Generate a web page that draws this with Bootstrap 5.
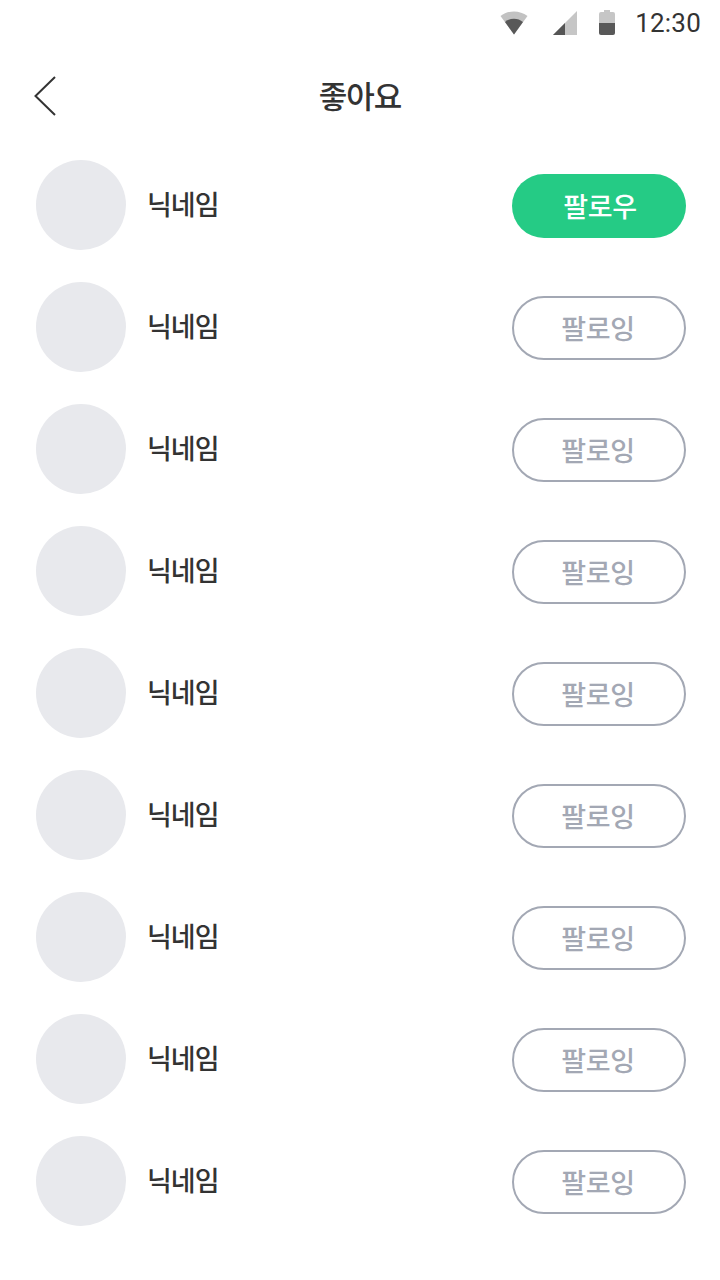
<!DOCTYPE html>
<html lang="ko">
    <head>
        <title>좋아요</title>
        <link href="https://cdn.jsdelivr.net/npm/bootstrap@5.3.2/dist/css/bootstrap.min.css" rel="stylesheet">
        <script src="https://cdn.jsdelivr.net/npm/bootstrap@5.3.2/dist/js/bootstrap.bundle.min.js"></script>
        <style>
            body { font-family: "Noto Sans CJK KR", Roboto, sans-serif; background: #fff; color: #333; }
            .status-bar { height: 48px; padding-right: 19px; padding-bottom: 2px; }
            .status-wifi { margin-right: 25px; }
            .status-signal { margin-right: 21px; }
            .status-time { font-family: Roboto, sans-serif; font-size: 26px; letter-spacing: 0.2px; color: #333; line-height: 1; margin-left: 19px; }
            .top-bar { height: 96px; padding-bottom: 4px; }
            .back-btn { position: absolute; left: 33px; top: 28px; line-height: 0; }
            .top-title { font-size: 31px; font-weight: 500; letter-spacing: -1px; color: #333; line-height: 1; }
            .like-list { padding: 16px 34px 0 36px; gap: 32px; }
            .avatar-blank { width: 90px; height: 90px; background: #e8e9ed; }
            .nick { font-size: 27px; font-weight: 500; letter-spacing: -1px; color: #333; margin-left: 21px; line-height: 1; margin-top: -4px; }
            .follow-btn { width: 174px; height: 64px; font-size: 27px; font-weight: 500; padding: 0 0 2px; line-height: 1; letter-spacing: -0.4px; margin-top: 2px; }
            .btn.follow-on { background: #25cb85; border: 0; color: #fff; padding-left: 2px; }
            .btn.follow-off { background: #fff; border: 2px solid #a3a8b4; color: #a3a8b4; padding-right: 2px; }
        </style>
    </head>
    <body>
        <div class="status-bar d-flex justify-content-end align-items-center">
            <svg class="status-wifi" width="28" height="24" viewBox="0 0 28 24">
                <path d="M0.500 5 C8.500 -1 19.500 -1 27.500 5 L14 23.500 Z" fill="#c2c2c2"/>
                <path d="M5 11 C10 6.500 18 6.500 23 11 L14 23.500 Z" fill="#585858"/>
            </svg>
            <svg class="status-signal" width="24" height="24" viewBox="0 0 24 24">
                <path d="M0 24 L24 0 V24 Z" fill="#c6c6c6"/>
                <path d="M0 24 L12 12 V24 Z" fill="#555"/>
            </svg>
            <svg width="18" height="26" viewBox="0 0 18 26">
                <path d="M6 0 H12 V2 H15 Q17 2 17 4 V13 H1 V4 Q1 2 3 2 H6 Z" fill="#c6c6c6"/>
                <path d="M1 13 H17 V23 Q17 25 15 25 H3 Q1 25 1 23 Z" fill="#585858"/>
            </svg>
            <span class="status-time">12:30</span>
        </div>

        <div class="top-bar position-relative d-flex justify-content-center align-items-center">
            <a class="back-btn" href="#">
                <svg width="24" height="40" viewBox="0 0 24 40">
                    <path d="M22 1 L2.500 20 L22 39" fill="none" stroke="#333" stroke-width="2"/>
                </svg>
            </a>
            <span class="top-title">좋아요</span>
        </div>

        <div id="spisak" class="like-list d-flex flex-column"></div>

        <script>
            window.addEventListener("DOMContentLoaded", function () {
                const spisak = document.getElementById("spisak");
                for (let i = 0; i < 9; i++) {
                    let row = document.createElement("div");
                    row.className = "d-flex align-items-center";

                    let avatar = document.createElement("div");
                    avatar.className = "avatar-blank rounded-circle flex-shrink-0";
                    row.appendChild(avatar);

                    let nick = document.createElement("span");
                    nick.className = "nick flex-grow-1";
                    nick.textContent = "닉네임";
                    row.appendChild(nick);

                    let btn = document.createElement("button");
                    btn.className = "btn follow-btn rounded-pill " + (i === 0 ? "follow-on" : "follow-off");
                    btn.textContent = i === 0 ? "팔로우" : "팔로잉";
                    row.appendChild(btn);

                    spisak.appendChild(row);
                }
            });
        </script>
    </body>
</html>
